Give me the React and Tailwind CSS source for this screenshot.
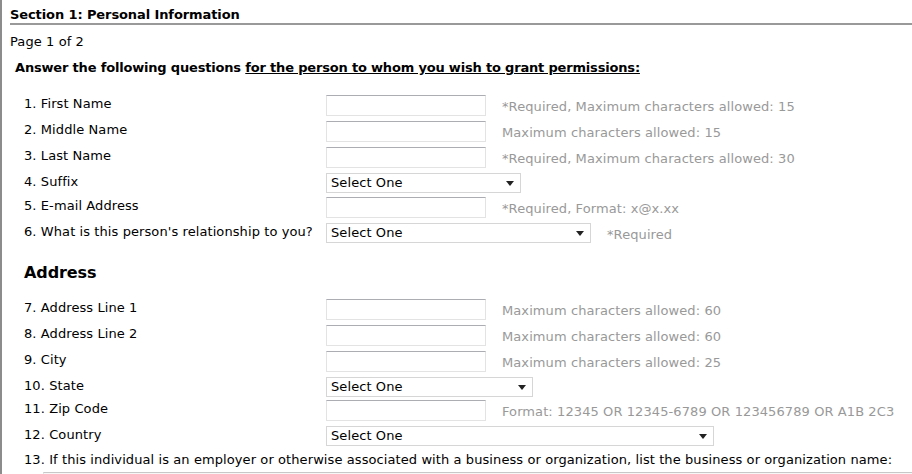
import React from 'react';

// Fake native controls so the look stays fixed across browsers.
function TextBox() {
  return (
    <div className="h-[21px] w-[160px] shrink-0 border border-[#e3e3e3] border-t-[#abadb3] bg-white" />
  );
}

function SelectBox({ width }) {
  return (
    <div
      className="flex h-[20px] shrink-0 items-center justify-between border border-[#d6d6d6] bg-white pl-[4px] pr-[6px]"
      style={{ width }}
    >
      <span>Select One</span>
      <svg width="8" height="5" viewBox="0 0 8 5">
        <path d="M0 0h8L4 5z" fill="#222" />
      </svg>
    </div>
  );
}

function Row({ label, control, hint, h }) {
  return (
    <div className="flex" style={{ height: h }}>
      <div className="w-[302px] shrink-0 pt-[1px] leading-[16px]">{label}</div>
      <div className="flex items-start">
        {control}
        {hint && (
          <span className="ml-[16px] mt-[3px] leading-[17px] text-[#999]">{hint}</span>
        )}
      </div>
    </div>
  );
}

const PERSON = [
  { label: '1. First Name', control: <TextBox />, hint: '*Required, Maximum characters allowed: 15', h: 26 },
  { label: '2. Middle Name', control: <TextBox />, hint: 'Maximum characters allowed: 15', h: 26 },
  { label: '3. Last Name', control: <TextBox />, hint: '*Required, Maximum characters allowed: 30', h: 26 },
  { label: '4. Suffix', control: <SelectBox width={195} />, h: 24 },
  { label: '5. E-mail Address', control: <TextBox />, hint: '*Required, Format: x@x.xx', h: 26 },
  { label: "6. What is this person's relationship to you?", control: <SelectBox width={265} />, hint: '*Required', h: 24 },
];

const ADDRESS = [
  { label: '7. Address Line 1', control: <TextBox />, hint: 'Maximum characters allowed: 60', h: 26 },
  { label: '8. Address Line 2', control: <TextBox />, hint: 'Maximum characters allowed: 60', h: 26 },
  { label: '9. City', control: <TextBox />, hint: 'Maximum characters allowed: 25', h: 26 },
  { label: '10. State', control: <SelectBox width={207} />, h: 23 },
  { label: '11. Zip Code', control: <TextBox />, hint: 'Format: 12345 OR 12345-6789 OR 123456789 OR A1B 2C3', h: 26 },
  { label: '12. Country', control: <SelectBox width={388} />, h: 24 },
];

export default function App() {
  return (
    <div className="h-[474px] overflow-hidden border-l-2 border-[#8c8c8c] bg-white font-['Verdana','DejaVu_Sans',sans-serif] text-[13px] tracking-[0.09px] text-black">
      <div className="ml-[8px] border-b-2 border-[#999] pt-[7px] font-bold leading-[16px] tracking-[-0.1px]">
        Section 1: Personal Information
      </div>
      <div className="ml-[8px] mt-[9px] leading-[16px]">Page 1 of 2</div>
      <div className="ml-[13px] mt-[10px] font-bold leading-[16px] tracking-[-0.18px]">
        Answer the following questions <span className="underline">for the person to whom you wish to grant permissions:</span>
      </div>

      <div className="ml-[22px] mt-[19px]">
        {PERSON.map((r) => (
          <Row key={r.label} {...r} />
        ))}
      </div>

      <div className="ml-[22px] mt-[17px] text-[16px] font-bold leading-[18px] tracking-[-0.1px]">Address</div>

      <div className="ml-[22px] mt-[17px]">
        {ADDRESS.map((r) => (
          <Row key={r.label} {...r} />
        ))}
        <div className="pt-[2px] leading-[16px]">
          13. If this individual is an employer or otherwise associated with a business or organization, list the business or organization name:
        </div>
        <div className="ml-[19px] mt-[4px] h-[60px] w-[880px] border border-[#e3e3e3] border-t-[#c8c8c8] bg-[#f7f7f7]" />
      </div>
    </div>
  );
}
